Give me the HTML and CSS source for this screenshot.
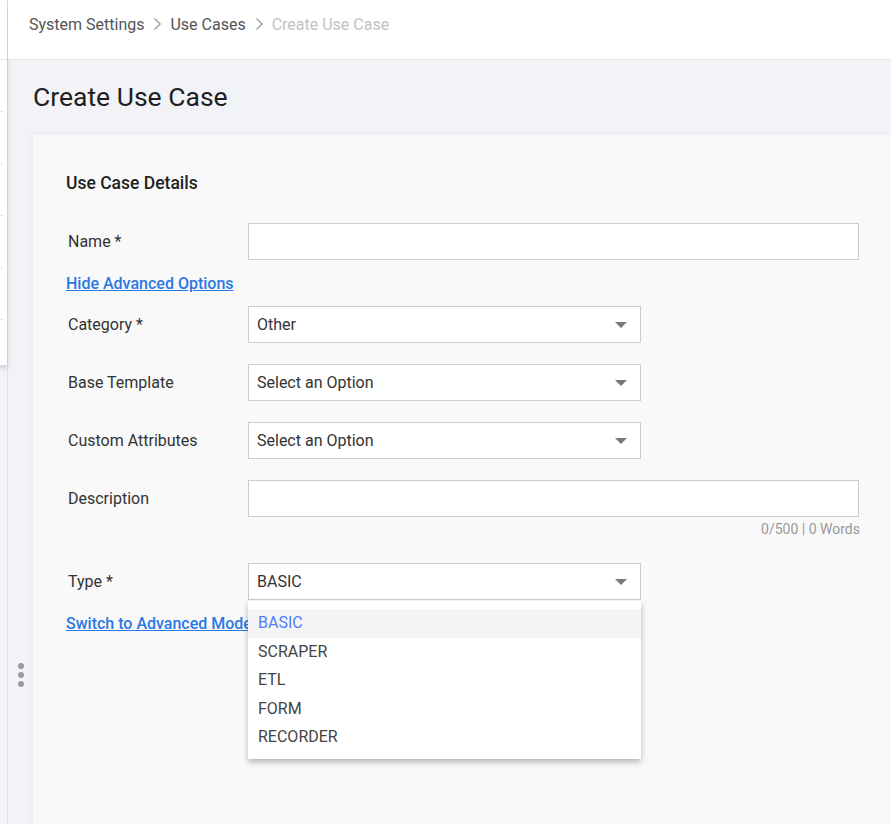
FILE: index.html
```html
<!DOCTYPE html>
<html lang="en">
<head>
  <meta charset="UTF-8">
  <meta name="viewport" content="width=device-width, initial-scale=1.0">
  <title>Create Use Case</title>
  <link rel="stylesheet" href="styles.css">
</head>
<body>
  <div class="layout">
    <div class="rail">
      <div class="rail-menu">
        <div class="rail-top"></div>
        <div class="rail-item"></div>
        <div class="rail-item"></div>
        <div class="rail-item"></div>
        <div class="rail-item"></div>
        <div class="rail-item"></div>
      </div>
    </div>
    <div class="main">
      <div class="topbar">
        <span class="crumb">System Settings</span>
        <svg class="chev" width="16" height="16" viewBox="0 0 16 16"><path d="M5.5 2.5l5.5 5.5-5.5 5.5" fill="none" stroke="#a8a8a8" stroke-width="1.6"/></svg>
        <span class="crumb">Use Cases</span>
        <svg class="chev" width="16" height="16" viewBox="0 0 16 16"><path d="M5.5 2.5l5.5 5.5-5.5 5.5" fill="none" stroke="#a8a8a8" stroke-width="1.6"/></svg>
        <span class="crumb current">Create Use Case</span>
      </div>
      <div class="content">
        <h1>Create Use Case</h1>
        <div class="handle"><span></span><span></span><span></span></div>
        <div class="card">
          <h2>Use Case Details</h2>
          <div class="row">
            <label>Name *</label>
            <div class="input wide"></div>
          </div>
          <a class="link" href="#">Hide Advanced Options</a>
          <div class="row">
            <label>Category *</label>
            <div class="input select"><span>Other</span><i class="caret"></i></div>
          </div>
          <div class="row">
            <label>Base Template</label>
            <div class="input select"><span>Select an Option</span><i class="caret"></i></div>
          </div>
          <div class="row">
            <label>Custom Attributes</label>
            <div class="input select"><span>Select an Option</span><i class="caret"></i></div>
          </div>
          <div class="row">
            <label>Description</label>
            <div class="input wide"></div>
          </div>
          <div class="counter">0/500 | 0 Words</div>
          <div class="row">
            <label>Type *</label>
            <div class="select-wrap">
              <div class="input select"><span>BASIC</span><i class="caret"></i></div>
              <ul class="menu">
                <li class="active">BASIC</li>
                <li>SCRAPER</li>
                <li>ETL</li>
                <li>FORM</li>
                <li>RECORDER</li>
              </ul>
            </div>
          </div>
          <a class="link" href="#">Switch to Advanced Mode</a>
        </div>
      </div>
    </div>
  </div>
</body>
</html>
```

FILE: styles.css
```css
:root {
  --bg: #f2f3f7;
  --card: #f9f9f9;
  --border: #cccccc;
  --text: #333333;
  --muted: #999999;
  --link: #2a78e4;
  --accent: #4d7efa;
}
html, body {
  margin: 0;
  padding: 0;
  height: 100%;
  overflow: hidden;
}
body {
  background: var(--bg);
  color: var(--text);
  font-family: Roboto, 'Liberation Sans', sans-serif;
}
.layout {
  display: flex;
  height: 824px;
}
.rail {
  width: 7px;
  border-right: 1px solid #e1e2e6;
  flex-shrink: 0;
}
.rail-menu {
  background: #fff;
  height: 365px;
  box-shadow: 0 3px 5px rgba(0,0,0,0.18);
}
.rail-top {
  height: 59px;
  border-bottom: 1px solid #e6e6e6;
}
.rail-item {
  height: 51px;
  width: 3px;
  border-bottom: 1px solid #e4e4e4;
}
.main {
  flex: 1;
  display: flex;
  flex-direction: column;
  min-width: 0;
}
.topbar {
  height: 60px;
  box-sizing: border-box;
  background: #fff;
  border-bottom: 1px solid #e6e6e8;
  display: flex;
  align-items: center;
  padding: 0 0 11px 21px;
  gap: 5px;
  font-size: 16px;
  flex-shrink: 0;
}
.crumb { color: #555; }
.crumb.current { color: #c2c2c2; }
.content {
  flex: 1;
  position: relative;
  padding: 22px 0 0 25px;
  display: flex;
  flex-direction: column;
}
h1 {
  margin: 0 0 23px;
  font-size: 26.5px;
  line-height: 30px;
  font-weight: 400;
  color: #1f1f1f;
}
.handle {
  position: absolute;
  left: 10px;
  top: 603px;
  display: flex;
  flex-direction: column;
  gap: 3px;
}
.handle span {
  width: 6px;
  height: 6px;
  border-radius: 50%;
  background: #9a9a9a;
}
.card {
  flex: 1;
  background: var(--card);
  box-shadow: -2px 0 6px rgba(0,0,0,0.04);
  padding: 36px 0 0 33px;
}
h2 {
  margin: 0 0 28px;
  font-size: 17.5px;
  line-height: 24px;
  font-weight: 500;
  color: #222;
}
.row {
  display: flex;
  align-items: center;
  margin-bottom: 21px;
}
.row label {
  width: 182px;
  padding-left: 2px;
  box-sizing: border-box;
  font-size: 16px;
  color: var(--text);
}
.input {
  height: 37px;
  box-sizing: border-box;
  border: 1px solid var(--border);
  background: #fff;
  width: 393px;
}
.input.wide { width: 611px; }
.select {
  display: flex;
  align-items: center;
  justify-content: space-between;
  padding: 0 13px 0 8px;
  font-size: 16px;
  color: var(--text);
}
.caret {
  width: 0;
  height: 0;
  border-left: 6px solid transparent;
  border-right: 6px solid transparent;
  border-top: 6px solid #777;
}
.link {
  display: block;
  width: max-content;
  font-size: 16px;
  line-height: 20px;
  font-weight: 500;
  color: var(--link);
  text-decoration: underline;
  margin: -7px 0 12px;
}
.counter {
  width: 794px;
  text-align: right;
  font-size: 14px;
  line-height: 16px;
  color: var(--muted);
  margin: -17px 0 26px;
}
.select-wrap { position: relative; }
.menu {
  position: absolute;
  top: 38px;
  left: 0;
  width: 393px;
  margin: 0;
  padding: 8px 0 7px;
  list-style: none;
  background: #fff;
  box-shadow: 0 3px 6px rgba(0,0,0,0.28);
  z-index: 5;
}
.menu li {
  height: 28.5px;
  line-height: 28px;
  padding-left: 10px;
  font-size: 16px;
  color: #444;
}
.menu li.active {
  background: #f5f5f5;
  color: var(--accent);
}
```
